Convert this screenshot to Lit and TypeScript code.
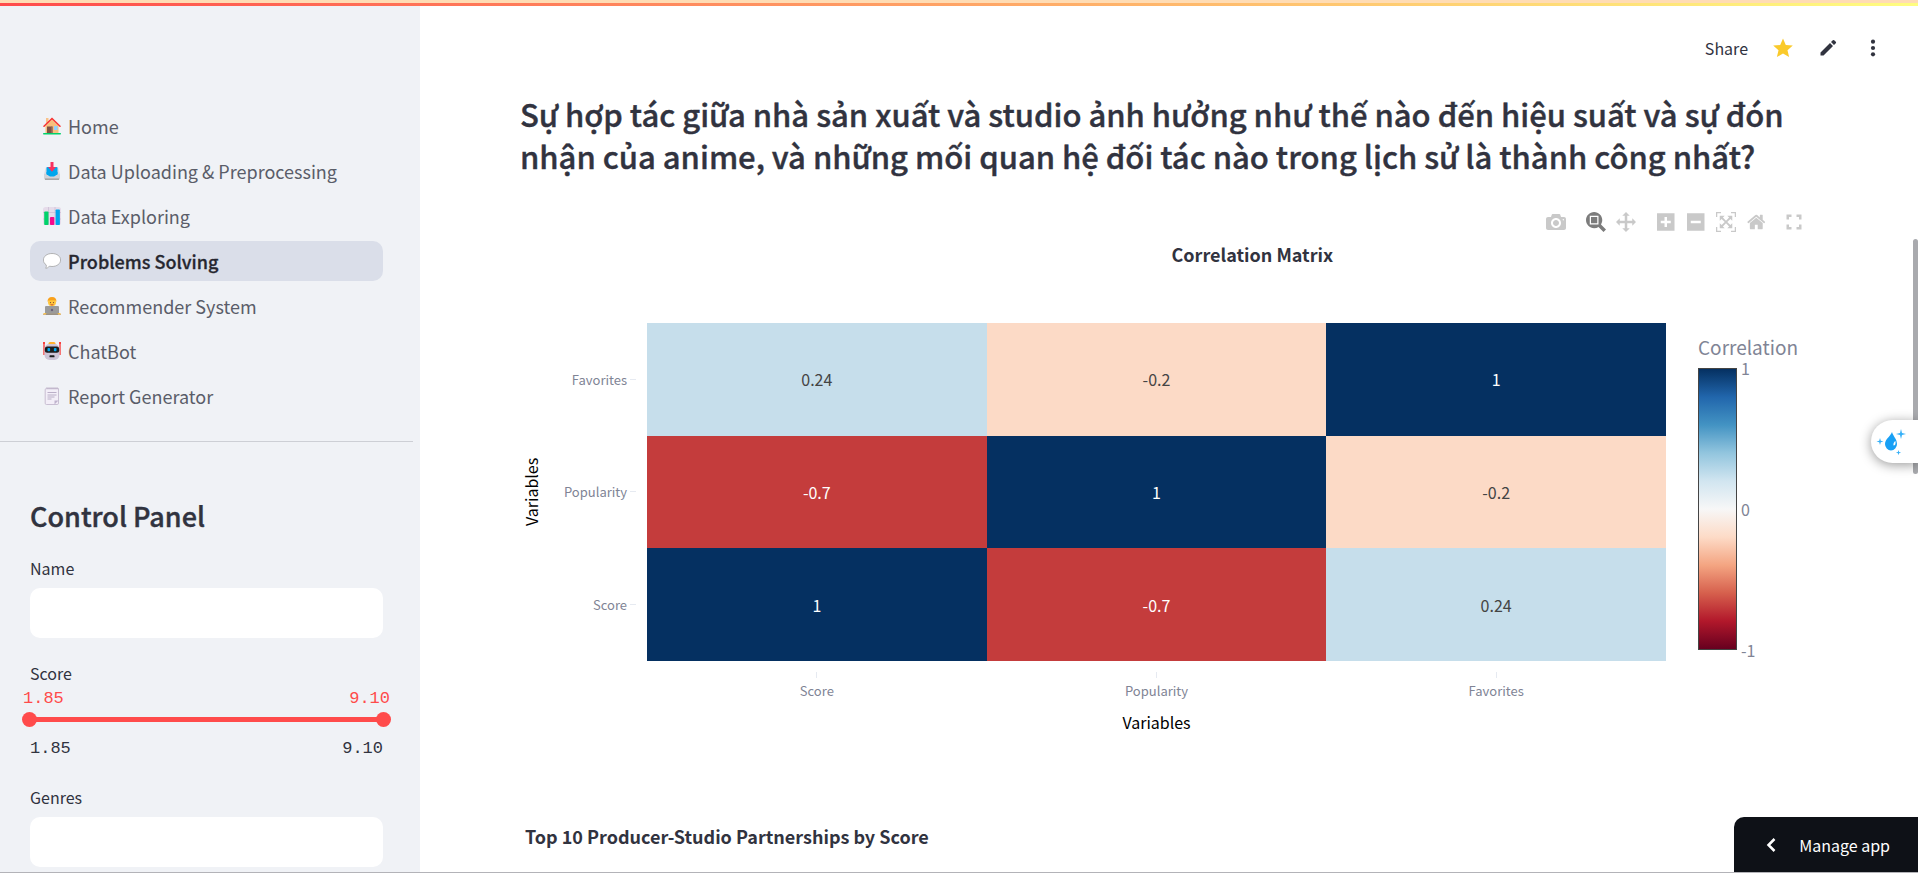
import { LitElement, html, css, svg } from "lit";
import { customElement, state } from "lit/decorators.js";
import { classMap } from "lit/directives/class-map.js";
import { styleMap } from "lit/directives/style-map.js";

const emoji = {
  home: svg`
    <path d="M3 1h2.500v5H3z" fill="#f9c28a"/>
    <path d="M2.500 9 9 2.500 15.500 9v7.500h-13z" fill="#f7bf7d"/>
    <path d="M4 9.500h5.500v7H4z" fill="#7d5245"/><path d="M8.200 9.500h1.300v7H8.200z" fill="#9a6b5b"/>
    <path d="M11 9h3.600v4H11z" fill="#8fd0ff"/>
    <path d="M1 9.300 9 1.500l8 7.800" fill="none" stroke="#f8312f" stroke-width="1.500" stroke-linecap="round"/>
    <rect x="0" y="16" width="18" height="1.500" rx=".7" fill="#00d26a"/>`,
  inbox: svg`
    <path d="M3 5h12l2 7v5H1v-5z" fill="#dcdce2"/>
    <rect x="3.500" y="5" width="11" height="8" rx="1" fill="#00a6ed"/>
    <path d="M1 12h3v2h10v-2h3v4q0 2-2 2H3q-2 0-2-2z" fill="#d3d3d8"/>
    <path d="M3.500 10h11v2.500L11 14.500H7l-3.500-2z" fill="#00a6ed"/>
    <path d="M2 16.500h14v1.300H2z" fill="#9b9b9b"/>
    <path d="M7.500 0h3v5H13L9 9.700 5 5h2.500z" fill="#f8315f"/>`,
  chart: svg`
    <rect x="0" y="0" width="18" height="18" rx="2.500" fill="#e6dcea"/>
    <path d="M5.500 0v18M12 0v18M0 5.500h18M0 12h18" stroke="#cdbfd6" stroke-width=".8"/>
    <rect x="1.200" y="4.500" width="4.300" height="13.500" rx=".8" fill="#00d26a"/>
    <rect x="7" y="10" width="4.300" height="8" rx=".8" fill="#f70a8d"/>
    <rect x="12.600" y="2.500" width="4.300" height="15.500" rx=".8" fill="#00a6ed"/>`,
  bubble: svg`
    <path d="M9 1.500c5 0 8.600 2.900 8.600 6.500S14 14.500 9 14.500c-.9 0-1.800-.1-2.600-.3-.9 1.200-2.200 2-3.600 2.100.5-1.100.7-2.300.4-3.400C1.400 11.700.4 10 .4 8 .4 4.400 4 1.500 9 1.500z" fill="#fff" stroke="#a3a3a3" stroke-width=".8"/>`,
  coder: svg`
    <path d="M2 18q0-8 7-8t7 8z" fill="#dfe1e8"/>
    <circle cx="9" cy="5.300" r="4" fill="#ffc83d"/>
    <path d="M4.500 5Q4.500 0 9 0t4.500 5L12.500 3.500 9 3.200 5.500 3.500z" fill="#f9a11b"/>
    <circle cx="7.500" cy="5.600" r=".6" fill="#7d4533"/><circle cx="10.500" cy="5.600" r=".6" fill="#7d4533"/>
    <path d="M7.600 7.500q1.400 1 2.800 0" stroke="#bb1d30" fill="none" stroke-width=".7"/>
    <rect x="2" y="9" width="14" height="8" rx="1" fill="#9b9b9b"/>
    <circle cx="9" cy="13" r="1.200" fill="#6d6277"/>
    <path d="M0 17q2-2 4 0zM14 17q2-2 4 0z" fill="#ffc83d"/>
    <path d="M0 16.800h18v1H0z" fill="#d8a75c"/><path d="M3 16.800h12v1H3z" fill="#8a8a8a"/>`,
  robot: svg`
    <path d="M1 0v13M17 0v13" stroke="#f8312f" stroke-width="1.300"/>
    <circle cx="1" cy="1" r="1" fill="#f8312f"/><circle cx="17" cy="1" r="1" fill="#f8312f"/>
    <rect x="5.500" y="0" width="7" height="3" rx="1.500" fill="#ffb02e"/>
    <rect x="1.500" y="2" width="15" height="16" rx="5" fill="#cdc4d6"/>
    <rect x="1.800" y="4.500" width="14.400" height="6.200" rx="2.500" fill="#1c1c1c"/>
    <rect x="4.500" y="6" width="2.600" height="3.200" rx=".8" fill="#00a6ed"/><rect x="10.900" y="6" width="2.600" height="3.200" rx=".8" fill="#00a6ed"/>
    <rect x="6.500" y="13.300" width="5" height="2" rx=".6" fill="#1c1c1c"/>`,
  note: svg`
    <path d="M3.500 1.500h12v14.700q0 1.300-1.300 1.300H3.500q-1.300 0-1.300-1.300V2.800q0-1.300 1.300-1.300z" fill="#f3eef8" stroke="#c4b9ce" stroke-width=".9"/>
    <path d="M4 0v2.500M6 0v2.500M8 0v2.500M10 0v2.500M12 0v2.500M14 0v2.500" stroke="#bbb0c6" stroke-width=".8"/>
    <path d="M4.500 5.500h9M4.500 8h9M4.500 10h7M4.500 12h4" stroke="#b4a7c2" stroke-width=".9"/>
    <path d="M15.500 13.500h-4v4z" fill="#c0b3cd"/>`,
};

const navItems = [
  { icon: emoji.home, label: "Home" },
  { icon: emoji.inbox, label: "Data Uploading & Preprocessing" },
  { icon: emoji.chart, label: "Data Exploring" },
  { icon: emoji.bubble, label: "Problems Solving" },
  { icon: emoji.coder, label: "Recommender System" },
  { icon: emoji.robot, label: "ChatBot" },
  { icon: emoji.note, label: "Report Generator" },
];

interface Tool {
  name: string;
  width: number;
  path: string;
  active?: boolean;
}

const toolGroups: Tool[][] = [
  [
    {
      name: "Download plot as a png",
      width: 1000,
      path: "m500 450c-83 0-150-67-150-150 0-83 67-150 150-150 83 0 150 67 150 150 0 83-67 150-150 150z m400 150h-120c-16 0-34 13-39 29l-31 93c-6 15-23 28-40 28h-340c-16 0-34-13-39-28l-31-94c-6-15-23-28-40-28h-120c-55 0-100-45-100-100v-450c0-55 45-100 100-100h800c55 0 100 45 100 100v450c0 55-45 100-100 100z m-400-550c-138 0-250 112-250 250 0 138 112 250 250 250 138 0 250-112 250-250 0-138-112-250-250-250z m365 380c-19 0-35 16-35 35 0 19 16 35 35 35 19 0 35-16 35-35 0-19-16-35-35-35z",
    },
  ],
  [
    {
      name: "Zoom",
      width: 1000,
      active: true,
      path: "m1000-25l-250 251c40 63 63 138 63 218 0 224-182 406-407 406-224 0-406-182-406-406s183-406 407-406c80 0 155 22 218 62l250-250 125 125z m-812 250l0 438 437 0 0-438-437 0z m62 375l313 0 0-312-313 0 0 312z",
    },
    {
      name: "Pan",
      width: 1000,
      path: "m1000 350l-187 188 0-125-250 0 0 250 125 0-188 187-187-187 125 0 0-250-250 0 0 125-188-188 186-187 0 125 252 0 0-250-125 0 187-188 188 188-125 0 0 250 250 0 0-126 187 188z",
    },
  ],
  [
    {
      name: "Zoom in",
      width: 875,
      path: "m1 787l0-875 875 0 0 875-875 0z m687-500l-187 0 0-187-125 0 0 187-188 0 0 125 188 0 0 187 125 0 0-187 187 0 0-125z",
    },
    {
      name: "Zoom out",
      width: 875,
      path: "m0 788l0-876 875 0 0 876-875 0z m688-500l-500 0 0 125 500 0 0-125z",
    },
    {
      name: "Autoscale",
      width: 1000,
      path: "m250 850l-187 0-63 0 0-62 0-188 63 0 0 188 187 0 0 62z m688 0l-188 0 0-62 188 0 0-188 62 0 0 188 0 62-62 0z m-875-938l0 188-63 0 0-188 0-62 63 0 187 0 0 62-187 0z m875 188l0-188-188 0 0-62 188 0 62 0 0 62 0 188-62 0z m-125 188l-1 0-93-94-156 156 156 156 92-93 2 0 0 250-250 0 0-2 93-92-156-156-156 156 94 92 0 2-250 0 0-250 0 0 93 93 157-156-157-156-93 94 0 0 0-250 250 0 0 0-94 93 156 157 156-157-93-93 0 0 250 0 0 250z",
    },
    {
      name: "Reset axes",
      width: 928.6,
      path: "m786 296v-267q0-15-11-26t-25-10h-214v214h-143v-214h-214q-15 0-25 10t-11 26v267q0 1 0 2t0 2l321 264 321-264q1-1 1-4z m124 39l-34-41q-5-5-12-6h-2q-7 0-12 3l-386 322-386-322q-7-4-13-4-7 2-12 7l-35 41q-4 5-3 13t6 12l401 334q18 15 42 15t43-15l136-114v109q0 8 5 13t13 5h107q8 0 13-5t5-13v-227l122-102q5-5 6-12t-4-13z",
    },
  ],
];

const variables = ["Score", "Popularity", "Favorites"];
const matrix = [
  [0.24, -0.2, 1],
  [-0.7, 1, -0.2],
  [1, -0.7, 0.24],
];
const cellColors: Record<string, string> = {
  "1": "#053061",
  "0.24": "#c6deeb",
  "-0.2": "#fcdac6",
  "-0.7": "#c43c3c",
};

const fontStack = css`"Noto Sans CJK JP", "Noto Sans CJK SC", "Open Sans", sans-serif`;

@customElement("side-panel")
export class SidePanel extends LitElement {
  @state() private low = 1.85;
  @state() private high = 9.1;

  static styles = css`
    :host {
      display: block;
      box-sizing: border-box;
      width: 420px;
      flex: none;
      overflow: hidden;
      background: #f0f2f6;
      padding-top: 100px;
    }
    .nav {
      display: grid;
      gap: 5px;
      padding: 0 37px 0 30px;
    }
    .link {
      display: flex;
      align-items: center;
      gap: 7px;
      height: 40px;
      padding: 0 13px;
      border-radius: 10px;
      color: #5a5d69;
      text-decoration: none;
      font-size: 18px;
      line-height: 24px;
    }
    .link.current {
      background: #dadee9;
      color: #262730;
      font-weight: 500;
      -webkit-text-stroke: 0.3px;
    }
    .emoji {
      width: 18px;
      height: 18px;
      flex: none;
    }
    .rule {
      height: 1px;
      margin: 25px 7px 54px 0;
      border: 0;
      background: #cdcfd5;
    }
    .controls {
      padding: 0 37px 0 30px;
    }
    .heading {
      margin: 0 0 21px;
      font-size: 27px;
      line-height: 40px;
      font-weight: 500;
      -webkit-text-stroke: 0.4px;
    }
    .field {
      margin-bottom: 24px;
    }
    .label {
      display: block;
      font-size: 16px;
      line-height: 22px;
    }
    .box {
      display: block;
      box-sizing: border-box;
      width: 100%;
      height: 50px;
      margin-top: 9px;
      padding: 0 12px;
      border: 0;
      border-radius: 10px;
      background: #fff;
      color: inherit;
      font: inherit;
    }
    .values {
      display: flex;
      justify-content: space-between;
      font: 17px/22px "Liberation Mono", monospace;
    }
    .values.chosen {
      margin: 4px -7px 0;
      color: #ff4b4b;
    }
    .values.limits {
      margin: 11px 0 26px;
    }
    .slider {
      display: grid;
      align-items: center;
      height: 15px;
      margin: 2px -8px 0;
    }
    .slider > * {
      grid-area: 1 / 1;
    }
    .track {
      height: 5px;
      margin: 0 8px;
      background: #ff4b4b;
    }
    .range {
      appearance: none;
      width: 100%;
      height: 15px;
      margin: 0;
      background: none;
      pointer-events: none;
    }
    .range::-webkit-slider-thumb {
      appearance: none;
      width: 15px;
      height: 15px;
      border-radius: 50%;
      background: #ff4b4b;
      pointer-events: auto;
    }
  `;

  render() {
    return html`
      <nav class="nav">
        ${navItems.map(
          (item, i) => html`
            <a class=${classMap({ link: true, current: i === 3 })} href="#">
              <svg class="emoji" viewBox="0 0 18 18" aria-hidden="true">${item.icon}</svg>
              <span>${item.label}</span>
            </a>
          `,
        )}
      </nav>
      <hr class="rule" />
      <section class="controls">
        <h2 class="heading">Control Panel</h2>
        <div class="field">
          <label class="label" for="name">Name</label>
          <input class="box" id="name" type="text" />
        </div>
        <label class="label" for="low">Score</label>
        <div class="values chosen">
          <span>${this.low.toFixed(2)}</span><span>${this.high.toFixed(2)}</span>
        </div>
        <div class="slider">
          <div class="track"></div>
          <input
            class="range" id="low" type="range" min="1.85" max="9.1" step="0.01" .value=${String(this.low)}
            @input=${(e: Event) => (this.low = Math.min(this.high, +(e.target as HTMLInputElement).value))}
          />
          <input
            class="range" aria-label="Highest score" type="range" min="1.85" max="9.1" step="0.01" .value=${String(this.high)}
            @input=${(e: Event) => (this.high = Math.max(this.low, +(e.target as HTMLInputElement).value))}
          />
        </div>
        <div class="values limits"><span>1.85</span><span>9.10</span></div>
        <div class="field">
          <label class="label" for="genres">Genres</label>
          <input class="box" id="genres" type="text" />
        </div>
      </section>
    `;
  }
}

@customElement("correlation-chart")
export class CorrelationChart extends LitElement {
  static styles = css`
    :host {
      display: block;
      color: #808495;
    }
    .modebar {
      display: flex;
      justify-content: flex-end;
      gap: 10px;
      height: 30px;
      padding-right: 6px;
    }
    .group {
      display: flex;
    }
    .tool {
      display: grid;
      place-items: center;
      width: 30px;
      padding: 0;
      border: 0;
      background: none;
      color: #c9c9c9;
    }
    .tool.active {
      color: #7c7c7c;
    }
    .tool.expand {
      width: 26px;
    }
    .tool svg {
      display: block;
      height: 20px;
      fill: currentColor;
    }
    .title {
      margin: 3px 0 55px;
      padding-left: calc(50% + 5px);
      color: #31333f;
      font-size: 18px;
      line-height: 28px;
      font-weight: 700;
    }
    .figure {
      display: grid;
      grid-template-columns: 22px 105px minmax(0, 1fr) 147px;
      grid-template-rows: 338px auto auto;
    }
    .y-title {
      display: grid;
      place-items: center;
      writing-mode: vertical-rl;
      rotate: 180deg;
      color: #000;
      font-size: 16px;
      line-height: 22px;
    }
    .y-axis,
    .cells {
      display: grid;
      grid-template-rows: repeat(3, 1fr);
    }
    .y-label {
      display: flex;
      align-items: center;
      justify-content: flex-end;
      gap: 3px;
      padding-right: 11px;
      font-size: 13px;
    }
    .y-label::after {
      content: "";
      width: 6px;
      height: 1px;
      background: #e6eaf1;
    }
    .cells,
    .x-axis {
      display: grid;
      grid-template-columns: repeat(3, 1fr);
    }
    .cell {
      display: grid;
      place-items: center;
      color: #fff;
      font-size: 16px;
    }
    .cell.dark {
      color: #444;
    }
    .x-axis {
      grid-column: 3;
      padding-top: 11px;
    }
    .x-label {
      display: grid;
      justify-items: center;
      gap: 3px;
      font-size: 13px;
      line-height: 20px;
    }
    .x-label::before {
      content: "";
      width: 1px;
      height: 6px;
      background: #e6eaf1;
    }
    .x-title {
      grid-column: 3;
      margin-top: 10px;
      text-align: center;
      color: #000;
      font-size: 16px;
      line-height: 22px;
    }
    .legend {
      padding: 13px 0 0 32px;
    }
    .legend-title {
      font-size: 19px;
      line-height: 22px;
    }
    .scale {
      display: flex;
      gap: 4px;
      height: 282px;
      margin-top: 10px;
    }
    .ramp {
      box-sizing: border-box;
      width: 39px;
      border: 1px solid #444;
      background: linear-gradient(
        #053061, #2166ac, #4393c3, #92c5de, #d1e5f0, #f7f7f7,
        #fddbc7, #f4a582, #d6604d, #b2182b, #67001f
      );
    }
    .stops {
      display: flex;
      flex-direction: column;
      justify-content: space-between;
      margin: -10px 0;
      font-size: 16px;
      line-height: 20px;
    }
  `;

  render() {
    return html`
      <div class="modebar">
        ${toolGroups.map(
          (group) => html`<div class="group">
            ${group.map(
              (t) => html`<button class=${classMap({ tool: true, active: !!t.active })} aria-label=${t.name}>
                <svg viewBox="0 0 ${t.width} 1000"><path transform="matrix(1 0 0 -1 0 850)" d=${t.path} /></svg>
              </button>`,
            )}
          </div>`,
        )}
        <button class="tool expand" aria-label="Fullscreen">
          <svg viewBox="0 0 20 20">
            <path d="M2.500 7.500v-5h5V5H5v2.500zM12.500 2.500h5v5H15V5h-2.500zM5 12.500V15h2.500v2.500h-5v-5zM15 12.500h2.500v5h-5V15H15z" />
          </svg>
        </button>
      </div>
      <h2 class="title">Correlation Matrix</h2>
      <div class="figure">
        <div class="y-title">Variables</div>
        <div class="y-axis">
          ${[...variables].reverse().map((v) => html`<div class="y-label">${v}</div>`)}
        </div>
        <div class="cells">
          ${matrix.flat().map(
            (v) => html`<div
              class=${classMap({ cell: true, dark: v === 0.24 || v === -0.2 })}
              style=${styleMap({ background: cellColors[String(v)] })}
            >${v}</div>`,
          )}
        </div>
        <div class="legend">
          <div class="legend-title">Correlation</div>
          <div class="scale">
            <div class="ramp"></div>
            <div class="stops"><span>1</span><span>0</span><span>-1</span></div>
          </div>
        </div>
        <div class="x-axis">${variables.map((v) => html`<div class="x-label">${v}</div>`)}</div>
        <div class="x-title">Variables</div>
      </div>
    `;
  }
}

@customElement("app-root")
export class AppRoot extends LitElement {
  static styles = css`
    :host {
      display: flex;
      flex-direction: column;
      box-sizing: border-box;
      height: 100vh;
      overflow: hidden;
      position: relative;
      border-bottom: 1px solid #b3b3b8;
      background: #fff;
      color: #31333f;
      font-family: ${fontStack};
    }
    .stripe {
      height: 3px;
      flex: none;
      border-top: 3px solid #ffdcb4;
      background: linear-gradient(90deg, #ff4b4b, #fffd80);
    }
    .columns {
      display: flex;
      flex: 1;
      min-height: 0;
    }
    .main {
      flex: 1;
      min-width: 0;
      overflow: hidden;
      padding: 0 105px 0 100px;
    }
    .toolbar {
      display: flex;
      align-items: center;
      justify-content: flex-end;
      height: 84px;
      margin-right: -82px;
    }
    .action {
      display: grid;
      place-items: center;
      min-width: 45px;
      height: 35px;
      padding: 0;
      border: 0;
      background: none;
      color: inherit;
      font: 16px/24px ${fontStack};
    }
    .share {
      padding: 0 12px;
    }
    .action svg {
      width: 20px;
      height: 20px;
      fill: #31333f;
    }
    .question {
      margin: 3px 0 30px;
      font-size: 31px;
      line-height: 42px;
      font-weight: 500;
      -webkit-text-stroke: 0.4px;
    }
    .next {
      margin: 89px 0 0 5px;
      font-size: 18px;
      line-height: 28px;
      font-weight: 700;
    }
    .thumb {
      position: absolute;
      right: 0;
      top: 239px;
      width: 5px;
      height: 235px;
      border-radius: 3px;
      background: #a9aaae;
    }
    .assistant {
      position: absolute;
      right: 0;
      top: 420px;
      width: 47px;
      height: 43px;
      padding: 0;
      border: 0;
      border-radius: 22px 0 0 22px;
      background: #fff;
      box-shadow: 0 2px 12px #0006;
    }
    .assistant svg {
      display: block;
      width: 47px;
      height: 43px;
    }
    .manage {
      position: absolute;
      right: 0;
      bottom: 0;
      display: flex;
      align-items: center;
      gap: 23px;
      height: 55px;
      padding: 0 28px 0 32px;
      border: 0;
      border-radius: 10px 0 0 0;
      background: #0e1117;
      color: #fff;
      font: 16px/24px ${fontStack};
    }
  `;

  render() {
    return html`
      <div class="stripe"></div>
      <div class="columns">
        <side-panel></side-panel>
        <main class="main">
          <div class="toolbar">
            <button class="action share">Share</button>
            <button class="action" aria-label="Favorite">
              <svg viewBox="0 0 20 20"><path fill="#faca2b" d="M10 .6l2.800 6.400 7 .6-5.300 4.600 1.600 6.900L10 15.400l-6.100 3.700 1.600-6.900L.2 7.600l7-.6z" /></svg>
            </button>
            <button class="action" aria-label="Edit source">
              <svg viewBox="0 0 20 20"><path d="M2.500 17.500v-3L12 5l3 3-9.500 9.500zM13 4l1.800-1.800q.7-.6 1.400 0l1.600 1.600q.7.700 0 1.400L16 7z" /></svg>
            </button>
            <button class="action" aria-label="More options">
              <svg viewBox="0 0 20 20"><circle cx="10" cy="3.700" r="2.100" /><circle cx="10" cy="10" r="2.100" /><circle cx="10" cy="16.300" r="2.100" /></svg>
            </button>
          </div>
          <h1 class="question">
            Sự hợp tác giữa nhà sản xuất và studio ảnh hưởng như thế nào đến hiệu suất và sự đón nhận của anime,
            và những mối quan hệ đối tác nào trong lịch sử là thành công nhất?
          </h1>
          <correlation-chart></correlation-chart>
          <h2 class="next">Top 10 Producer-Studio Partnerships by Score</h2>
        </main>
      </div>
      <div class="thumb"></div>
      <button class="assistant" aria-label="Assistant">
        <svg viewBox="0 0 47 43" fill="#18a0f5">
          <path d="M21 12c1 4 5 7 5 12a6 6.500 0 0 1-12 0c0-5 5-7 7-12z" />
          <path d="M24.500 21q-2.500 1.500-2 4.500 2.500 0 2-4.500z" fill="#fff" />
          <path d="M30 9l1 4 4 1-4 1-1 4-1-4-4-1 4-1zM9 18l.8 2.700 2.700.8-2.700.8L9 25l-.8-2.700-2.700-.8 2.700-.8zM27.500 30l.6 2 2 .6-2 .6-.6 2-.6-2-2-.6 2-.6z" fill="#36b0f8" />
        </svg>
      </button>
      <button class="manage">
        <svg width="10" height="16" viewBox="0 0 10 16" fill="none" stroke="#fff" stroke-width="2.500"><path d="M8.500 2 2.500 8l6 6" /></svg>
        Manage app
      </button>
    `;
  }
}
